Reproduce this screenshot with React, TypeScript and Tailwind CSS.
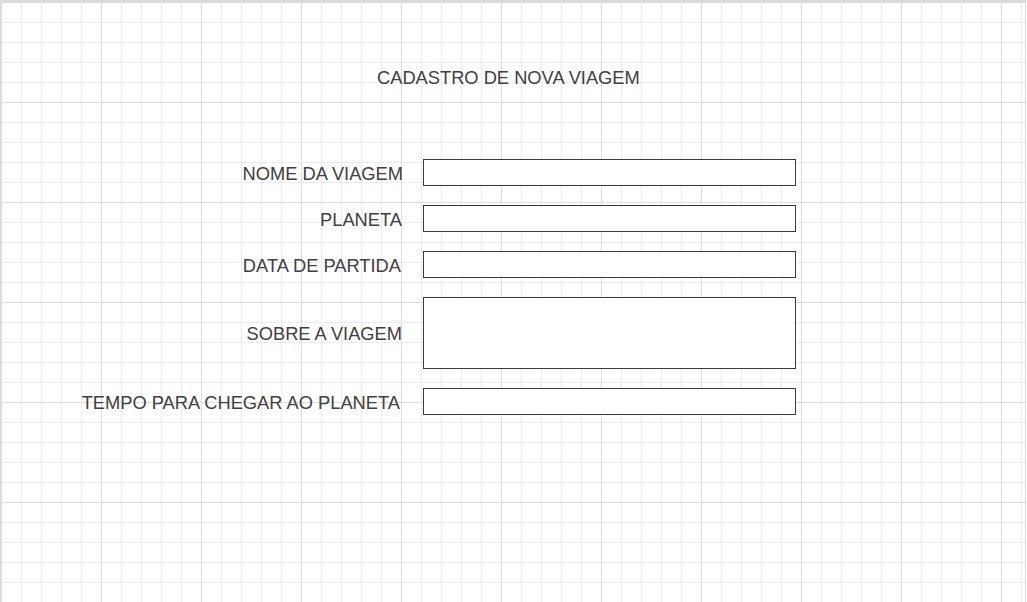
import React from 'react';

const fields = [
  { label: 'NOME DA VIAGEM', tall: false, pad: 'pr-0' },
  { label: 'PLANETA', tall: false, pad: 'pr-[1px]' },
  { label: 'DATA DE PARTIDA', tall: false, pad: 'pr-[2px]' },
  { label: 'SOBRE A VIAGEM', tall: true, pad: 'pr-[1px]' },
  { label: 'TEMPO PARA CHEGAR AO PLANETA', tall: false, pad: 'pr-[3px]' },
];

const App: React.FC = () => {
  return (
    <div className="w-[1026px] h-[602px] overflow-hidden border-t-2 border-l border-r border-[#dadada] bg-white bg-[linear-gradient(to_right,#dddddd_1px,transparent_1px),linear-gradient(to_bottom,#dddddd_1px,transparent_1px),linear-gradient(to_right,#ececec_1px,transparent_1px),linear-gradient(to_bottom,#ececec_1px,transparent_1px)] [background-size:100px_100px,100px_100px,20px_20px,20px_20px] font-['Liberation_Sans',Arial,sans-serif] text-[#404040]">
      {/* Title */}
      <div className="pt-[65px]">
        <h1 className="ml-[376px] text-[18.3px] leading-[21px]">CADASTRO DE NOVA VIAGEM</h1>
      </div>

      {/* Form */}
      <form className="mt-[71px] flex flex-col gap-[19px]">
        {fields.map((f) => (
          <div key={f.label} className="flex items-center gap-[20px]">
            <label className={`w-[402px] pt-[1px] text-right text-[18.3px] leading-[21px] ${f.pad}`}>{f.label}</label>
            {f.tall ? (
              <textarea className="w-[373px] h-[72px] resize-none border border-[#3a3a3a] bg-white outline-none" />
            ) : (
              <input type="text" className="w-[373px] h-[27px] border border-[#3a3a3a] bg-white outline-none" />
            )}
          </div>
        ))}
      </form>
    </div>
  );
};

export default App;
